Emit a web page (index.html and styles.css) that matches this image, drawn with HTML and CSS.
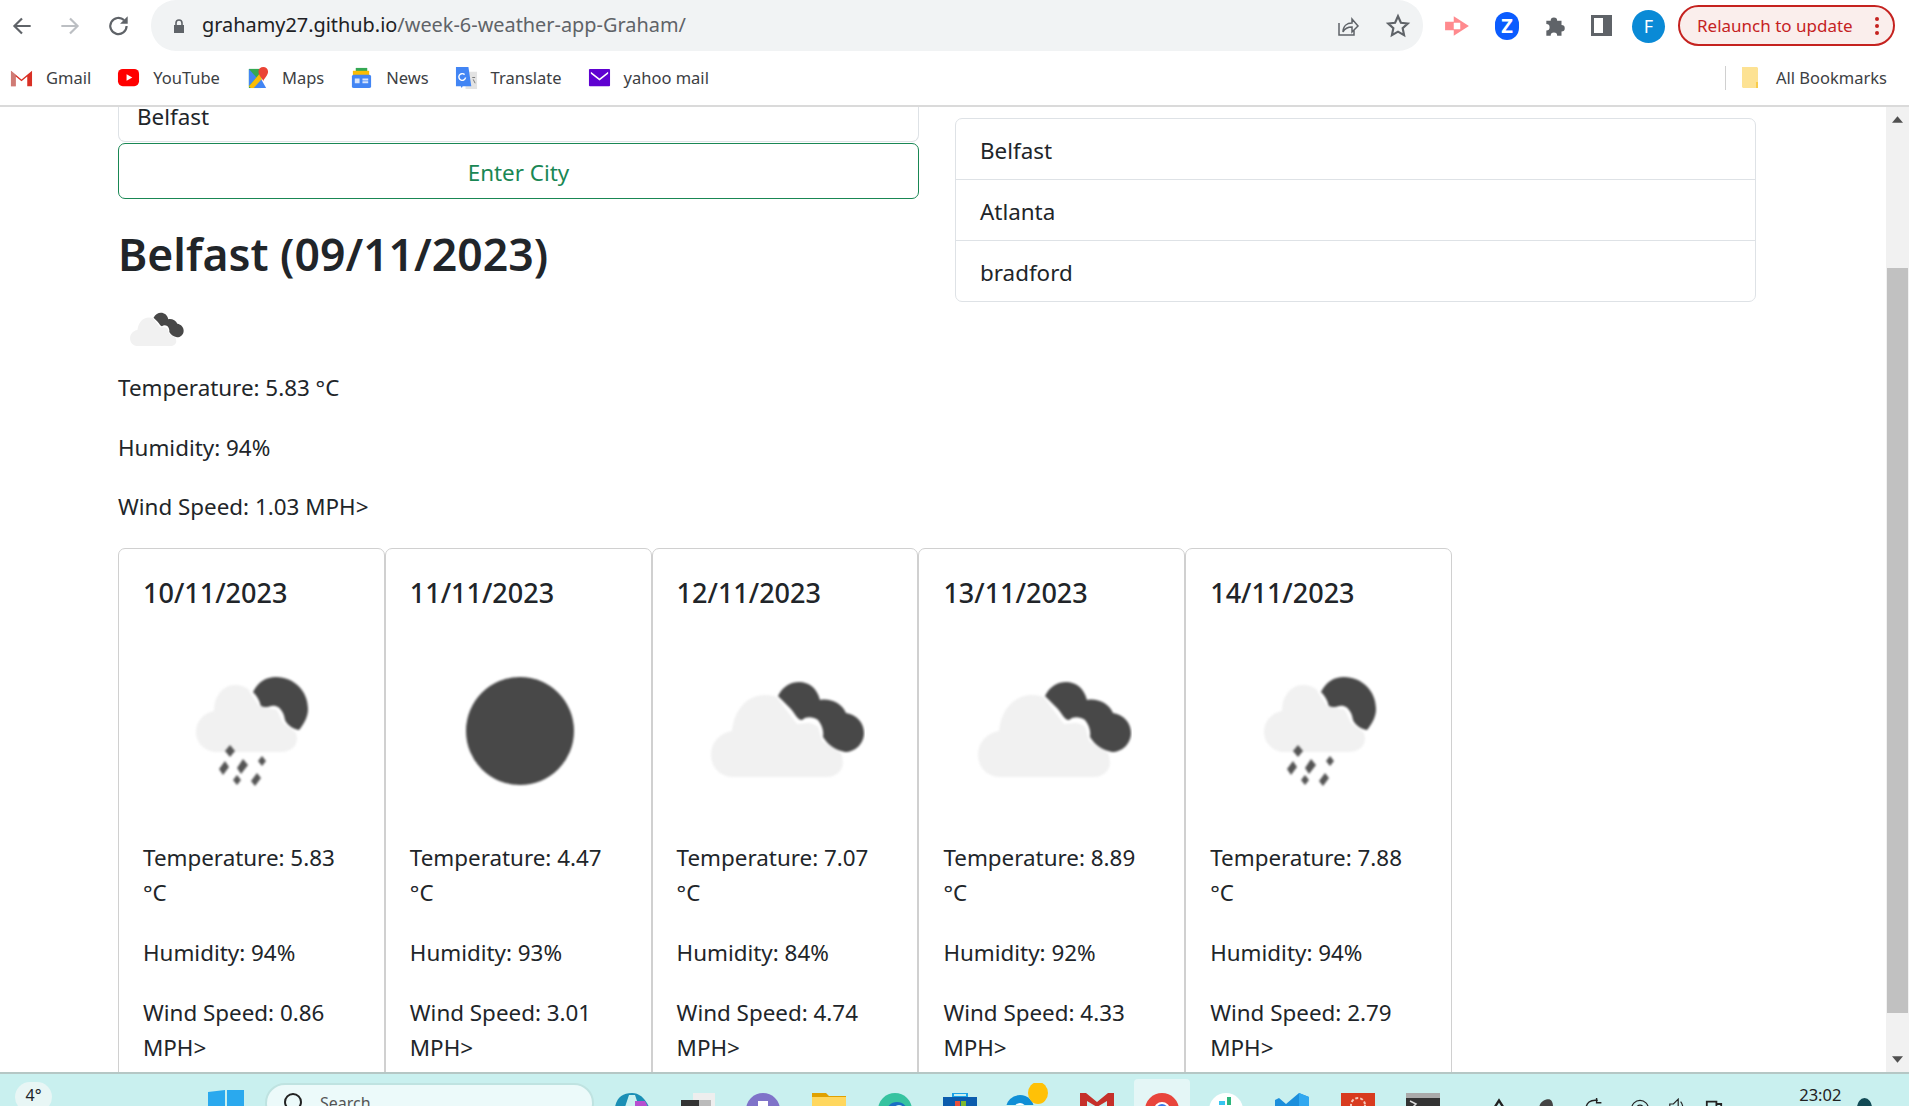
FILE: index.html
```html
<!DOCTYPE html>
<html lang="en">
<head>
    <meta charset="UTF-8">
    <title>Weather Dashboard</title>
    <link rel="stylesheet" href="styles.css">
</head>
<body>
    <svg class="defs" width="0" height="0">
        <symbol id="clouds-night" viewBox="0 0 160 160">
            <g transform="translate(0 14)" class="soft">
                <path fill="#f1f1f1" d="M28 112C15 112 6 102 6 90 6 77 15 68 27 66 29 45 42 30 60 30 78 30 90 42 96 55 115 60 124 68 128 78 134 82 138 90 138 98 138 106 130 112 122 112Z"/>
                <path fill="#fff" d="M70 30L92 59 112 57 117 76 140 91 160 70 100 12Z"/>
                <path fill="#484848" d="M73 31C78 21 86 17 94 17 104 17 112 23 115 35 125 33 137 38 141 48 152 50 159 58 159 68 159 79 150 87 140 87 130 85 123 80 118 72 119 66 117 60 113 55 108 52 102 51 97 55 92 55 91 49 84 42 78 38Z"/>
            </g>
        </symbol>
        <symbol id="snow-night" viewBox="0 0 160 160">
            <g class="soft">
                <path fill="#f1f1f1" d="M46 101C34 101 25 92 25 81 25 70 33 62 43 60 43 45 52 34 64 34 74 34 82 40 86 50 100 52 110 60 114 70 122 74 126 82 126 88 126 96 118 101 110 101Z"/>
                <path fill="#fff" d="M78 40L88 55 106 59 112 72 128 84 142 60 105 20Z"/>
                <path fill="#484848" d="M82 41C87 31 95 26 105 26 123 26 137 40 137 58 137 66 133 73 128 79 122 78 116 74 114 69 113 62 110 58 107 56 102 53 98 56 95 56 91 56 89 55 89 52 87 47 85 44 82 41Z"/>
                <g fill="#555">
                    <path d="M59 94l5 6-5 6-5-6z"/>
                    <path d="M54 110l4 6-6 8-4-6z"/>
                    <path d="M72 108l5 6-7 9-4-6z"/>
                    <path d="M91 105l4 5-4 5-4-5z"/>
                    <path d="M66 124l4 5-4 5-4-5z"/>
                    <path d="M86 122l4 5-6 8-4-5z"/>
                </g>
            </g>
        </symbol>
        <symbol id="clear-night" viewBox="0 0 160 160">
            <circle class="soft" cx="82" cy="80" r="54" fill="#484848"/>
        </symbol>
    </svg>

    <div class="toolbar">
        <svg class="nav-icon" viewBox="0 0 24 24"><path d="M20 12H5M12 5l-7 7 7 7" fill="none" stroke="#5f6368" stroke-width="2"/></svg>
        <svg class="nav-icon nav-forward" viewBox="0 0 24 24"><path d="M4 12h15M12 5l7 7-7 7" fill="none" stroke="#bcbfc3" stroke-width="2"/></svg>
        <svg class="nav-icon nav-reload" viewBox="0 0 24 24"><path d="M19 12a7.5 7.5 0 1 1-2.3-5.4" fill="none" stroke="#5f6368" stroke-width="2"/><path d="M20 3v7h-7z" fill="#5f6368"/></svg>
        <div class="omnibox">
            <svg class="lock" viewBox="0 0 16 16"><path d="M3 7h10v8H3z" fill="#5f6368"/><path d="M5 7V5a3 3 0 0 1 6 0v2" fill="none" stroke="#5f6368" stroke-width="1.6"/></svg>
            <span class="url">grahamy27.github.io<span class="url-path">/week-6-weather-app-Graham/</span></span>
            <svg class="share" viewBox="0 0 24 24"><path d="M3 9v12h15v-5M7 18c0-6 4-9 9-9V5l6 7-6 6v-5c-4 0-7 1-9 5z" fill="none" stroke="#5f6368" stroke-width="1.5"/></svg>
            <svg class="star" viewBox="0 0 24 24"><path d="M12 3l2.700 6 6.300.7-4.700 4.300 1.300 6.400L12 17.200 6.400 20.400 7.700 14 3 9.700 9.300 9z" fill="none" stroke="#5f6368" stroke-width="2"/></svg>
        </div>
        <svg class="ext-arrow" viewBox="0 0 24 24"><path d="M1 8h8V3l14 9-14 9v-5H1z" fill="#ff8a8e"/><path d="M9 9h6v6H9z" fill="#fff"/></svg>
        <div class="ext-zoom">Z</div>
        <svg class="ext-puzzle" viewBox="0 0 24 24"><path d="M4 8h4a3 3 0 0 1 6 0h4v4a3 3 0 0 1 0 6v4h-4a3 3 0 0 0-6 0H4v-5a3 3 0 0 0 0-6z" fill="#5f6368"/></svg>
        <div class="side-panel"></div>
        <div class="avatar">F</div>
        <div class="relaunch">
            <span>Relaunch to update</span>
            <span class="dots"><i></i><i></i><i></i></span>
        </div>
    </div>

    <div class="bookmarks">
        <div class="bookmark bm-gmail">
            <svg class="bm-icon" viewBox="0 0 24 20"><path d="M1 19V3l11 9 11-9v16h-5V9l-6 5-6-5v10z" fill="#d93025"/><path d="M1 19V3l5 4v12z" fill="#c5c5c5" opacity=".5"/></svg>
            <span>Gmail</span>
        </div>
        <div class="bookmark bm-youtube">
            <svg class="bm-icon" viewBox="0 0 24 20"><rect x="1" y="1" width="22" height="18" rx="5" fill="#f00"/><path d="M10 6.500l6 3.500-6 3.500z" fill="#fff"/></svg>
            <span>YouTube</span>
        </div>
        <div class="bookmark bm-maps">
            <svg class="bm-icon" viewBox="0 0 24 24"><path d="M3 3h13v20H3z" fill="#34a853"/><path d="M3 3l8 9-8 9z" fill="#4285f4"/><path d="M3 21L16 6v17H5z" fill="#fbbc04"/><path d="M8 23l8-9 5 9z" fill="#4285f4"/><path d="M18 1a5 5 0 0 1 5 5c0 4-5 8-5 10 0-2-5-6-5-10a5 5 0 0 1 5-5z" fill="#ea4335"/></svg>
            <span>Maps</span>
        </div>
        <div class="bookmark bm-news">
            <svg class="bm-icon" viewBox="0 0 24 24"><path d="M6 2h12v7H6z" fill="#34a853"/><path d="M3 5h17v5H3z" fill="#fbbc04"/><rect x="2" y="9" width="20" height="14" rx="2" fill="#4285f4"/><path d="M5 13h5v5H5zM13 13h6v2h-6zM13 16h6v2h-6z" fill="#d6e4fc"/></svg>
            <span>News</span>
        </div>
        <div class="bookmark bm-translate">
            <svg class="bm-icon" viewBox="0 0 24 24"><path d="M11 6h12v18H11z" fill="#e3e3e3"/><path d="M1 1h13l3 20H8l-1 2-1-2H1z" fill="#4285f4"/><path d="M11 12a3.500 3.500 0 1 1-1-3" fill="none" stroke="#fff" stroke-width="1.500"/><path d="M18 12h3M19 14l2 4" stroke="#777" stroke-width="1"/></svg>
            <span>Translate</span>
        </div>
        <div class="bookmark bm-yahoo">
            <svg class="bm-icon" viewBox="0 0 24 20"><rect x="1" y="1" width="22" height="18" rx="1" fill="#5f01d1"/><path d="M3 4l9 7 9-7v2l-9 7-9-7z" fill="#fff"/></svg>
            <span>yahoo mail</span>
        </div>
        <div class="bm-sep"></div>
        <div class="bookmark bm-all">
            <svg class="bm-folder" viewBox="0 0 18 22"><path d="M1 0h15l1 1v20H2l-1-1z" fill="#fde293"/><path d="M15 15h2v6h-2z" fill="#f9cc4a"/></svg>
            <span>All Bookmarks</span>
        </div>
    </div>

    <div class="viewport">
        <div class="page">
            <div class="top-grid">
                <div class="left-col">
                    <div class="city-input">Belfast</div>
                    <div class="city-btn">Enter City</div>
                    <h1 class="city-title">Belfast (09/11/2023)</h1>
                    <svg class="today-icon"><use href="#clouds-night"/></svg>
                    <p>Temperature: 5.83 °C</p>
                    <p>Humidity: 94%</p>
                    <p class="last-line">Wind Speed: 1.03 MPH&gt;</p>
                </div>
                <ul class="history">
                    <li>Belfast</li>
                    <li>Atlanta</li>
                    <li>bradford</li>
                </ul>
            </div>
            <div class="forecast">
                <div class="card">
                    <h5>10/11/2023</h5>
                    <svg class="card-icon"><use href="#snow-night"/></svg>
                    <p>Temperature: 5.83 °C</p>
                    <p>Humidity: 94%</p>
                    <p>Wind Speed: 0.86 MPH&gt;</p>
                </div>
                <div class="card">
                    <h5>11/11/2023</h5>
                    <svg class="card-icon"><use href="#clear-night"/></svg>
                    <p>Temperature: 4.47 °C</p>
                    <p>Humidity: 93%</p>
                    <p>Wind Speed: 3.01 MPH&gt;</p>
                </div>
                <div class="card">
                    <h5>12/11/2023</h5>
                    <svg class="card-icon"><use href="#clouds-night"/></svg>
                    <p>Temperature: 7.07 °C</p>
                    <p>Humidity: 84%</p>
                    <p>Wind Speed: 4.74 MPH&gt;</p>
                </div>
                <div class="card">
                    <h5>13/11/2023</h5>
                    <svg class="card-icon"><use href="#clouds-night"/></svg>
                    <p>Temperature: 8.89 °C</p>
                    <p>Humidity: 92%</p>
                    <p>Wind Speed: 4.33 MPH&gt;</p>
                </div>
                <div class="card">
                    <h5>14/11/2023</h5>
                    <svg class="card-icon"><use href="#snow-night"/></svg>
                    <p>Temperature: 7.88 °C</p>
                    <p>Humidity: 94%</p>
                    <p>Wind Speed: 2.79 MPH&gt;</p>
                </div>
            </div>
        </div>
        <div class="scrollbar">
            <svg class="scroll-arrow" viewBox="0 0 10 6"><path d="M5 0l5 6H0z" fill="#505050"/></svg>
            <div class="scroll-thumb"></div>
            <svg class="scroll-arrow" viewBox="0 0 10 6"><path d="M0 0h10L5 6z" fill="#505050"/></svg>
        </div>
    </div>

    <div class="taskbar">
        <div class="weather-pill">4°</div>
        <svg class="tb-win" viewBox="0 0 36 20"><path d="M0 2l17-2v20H0zM19 0h17v20H19z" fill="#2aa9ee"/></svg>
        <div class="tb-search">
            <svg class="tb-search-icon" viewBox="0 0 20 20"><circle cx="10" cy="10" r="8" fill="none" stroke="#222" stroke-width="2"/></svg>
            <span>Search</span>
        </div>
        <svg class="tb-app" viewBox="0 0 34 14"><path d="M0 14C2 4 8 0 17 0c7 0 13 5 17 14z" fill="#1b8fb5"/><path d="M14 2h6l4 12H10z" fill="#c9f0ef"/><path d="M20 8h10l3 6H20z" fill="#b64fd0"/></svg>
        <svg class="tb-app" viewBox="0 0 34 14"><path d="M12 0h22v14H12z" fill="#eee"/><path d="M0 7h18v7H0z" fill="#333"/><path d="M18 7h12v7H18z" fill="#bbb"/></svg>
        <svg class="tb-app" viewBox="0 0 34 14"><circle cx="17" cy="17" r="17" fill="#7f73c9"/><rect x="12" y="8" width="10" height="6" fill="#fff"/></svg>
        <svg class="tb-app" viewBox="0 0 34 14"><path d="M0 0h14l3 3h17v11H0z" fill="#e0a100"/><path d="M0 4h34v10H0z" fill="#ffd75e"/></svg>
        <svg class="tb-app" viewBox="0 0 34 14"><circle cx="17" cy="17" r="17" fill="#36c3a0"/><circle cx="19" cy="20" r="11" fill="#1a6fc4"/><circle cx="21" cy="18" r="6" fill="#c9f0ef"/></svg>
        <svg class="tb-app" viewBox="0 0 34 14"><path d="M10 0h14v4H10z" fill="none" stroke="#1aa3e8" stroke-width="2"/><path d="M0 4h34v10H0z" fill="#0b5cad"/><path d="M12 8h5v6h-5z" fill="#e8503a"/><path d="M18 8h5v6h-5z" fill="#7cb82f"/></svg>
        <svg class="tb-app tb-swirl" viewBox="0 0 42 22"><circle cx="14" cy="26" r="14" fill="#0f8fd6"/><circle cx="14" cy="26" r="6" fill="#fff"/><ellipse cx="32" cy="10" rx="10" ry="11" fill="#ffc107"/></svg>
        <svg class="tb-app" viewBox="0 0 34 14"><path d="M0 0h6l11 9 11-9h6v14h-7V8l-10 6L7 8v6H0z" fill="#c5302a"/></svg>
        <div class="tb-active">
            <svg class="tb-chrome" viewBox="0 0 34 14"><circle cx="17" cy="17" r="17" fill="#e8453c"/><path d="M0 17h17v17H0z" fill="#34a853"/><circle cx="17" cy="17" r="8" fill="#fff"/><circle cx="17" cy="17" r="6" fill="#3b78e7"/></svg>
        </div>
        <svg class="tb-app" viewBox="0 0 34 14"><circle cx="17" cy="17" r="17" fill="#fff"/><path d="M18 4h4v8h-4z" fill="#2eb67d"/><path d="M10 8h6v4h-6z" fill="#36c5f0"/></svg>
        <svg class="tb-app" viewBox="0 0 34 14"><path d="M0 7l4-2 7 6L24 0l10 4v10H0z" fill="#1c8fdc"/><path d="M24 0l10 4v10H24z" fill="#31a8f0"/></svg>
        <svg class="tb-app" viewBox="0 0 34 14"><path d="M0 0h34v14H0z" fill="#d83b1f"/><circle cx="17" cy="12" r="7" fill="none" stroke="#f4c9bb" stroke-width="2" stroke-dasharray="3 2"/></svg>
        <svg class="tb-app" viewBox="0 0 34 14"><path d="M0 0h34v6H0z" fill="#aaa"/><path d="M0 5h34v9H0z" fill="#333"/><path d="M4 8l6 3-3 3" fill="none" stroke="#ddd" stroke-width="1.500"/></svg>
        <div class="tb-tray">
            <svg class="tray-icon" viewBox="0 0 16 10"><path d="M3 10l5-8 5 8" fill="none" stroke="#222" stroke-width="2"/></svg>
            <svg class="tray-icon" viewBox="0 0 16 10"><path d="M2 10C2 4 6 1 10 1c3 0 4 3 4 9z" fill="#444"/></svg>
            <svg class="tray-icon" viewBox="0 0 16 10"><path d="M2 10C2 4 6 1 12 2M11 0v4h4" fill="none" stroke="#222" stroke-width="1.200"/></svg>
            <svg class="tray-icon" viewBox="0 0 16 10"><circle cx="8" cy="9" r="7" fill="none" stroke="#222" stroke-width="1"/><circle cx="8" cy="9" r="3" fill="none" stroke="#222" stroke-width="1"/></svg>
            <svg class="tray-icon tray-tight" viewBox="0 0 16 10"><path d="M2 5h3l4-4v9H2zM11 3c2 2 2 5 2 7" fill="none" stroke="#222" stroke-width="1"/></svg>
            <svg class="tray-icon tray-tight" viewBox="0 0 16 10"><path d="M2 3h8v7H2zM10 5h4v5h-4z" fill="none" stroke="#222" stroke-width="1.500"/></svg>
        </div>
        <div class="tb-time">23:02</div>
        <div class="tb-dot"></div>
    </div>
</body>
</html>
```

FILE: styles.css
```css
* {
    box-sizing: border-box;
}
html, body {
    margin: 0;
    padding: 0;
}
body {
    width: 1909px;
    height: 1106px;
    overflow: hidden;
    display: flex;
    flex-direction: column;
    font-family: "Noto Sans", "Open Sans", sans-serif;
    color: #212529;
    background-color: #fff;
}
.defs {
    position: absolute;
}
.soft {
    filter: blur(0.9px);
}

/* browser toolbar */
.toolbar {
    height: 52px;
    display: flex;
    align-items: flex-start;
    flex-shrink: 0;
}
.nav-icon {
    width: 26px;
    height: 26px;
    margin: 13px 0 0 9px;
    flex-shrink: 0;
}
.nav-forward {
    margin-left: 22px;
}
.nav-reload {
    margin-left: 23px;
}
.omnibox {
    width: 1272px;
    height: 51px;
    margin-left: 19px;
    background-color: #f1f3f4;
    border-radius: 25px;
    display: flex;
    align-items: center;
    padding-left: 20px;
}
.lock {
    width: 16px;
    height: 18px;
}
.url {
    margin-left: 15px;
    font-size: 19.900px;
    color: #202124;
    white-space: nowrap;
    margin-top: -2px;
}
.url-path {
    color: #5f6368;
}
.share {
    width: 24px;
    height: 24px;
    margin-left: auto;
}
.star {
    width: 26px;
    height: 26px;
    margin: 0 12px 0 25px;
}
.ext-arrow {
    width: 26px;
    height: 26px;
    margin: 13px 0 0 21px;
}
.ext-zoom {
    width: 24px;
    height: 28px;
    margin: 12px 0 0 25px;
    border-radius: 12px;
    background-color: #0b5cff;
    color: #fff;
    font-size: 20px;
    font-weight: 700;
    line-height: 28px;
    text-align: center;
}
.ext-puzzle {
    width: 26px;
    height: 26px;
    margin: 12px 0 0 23px;
}
.side-panel {
    width: 21px;
    height: 21px;
    margin: 15px 0 0 23px;
    border: 3px solid #5f6368;
    border-right-width: 9px;
}
.avatar {
    width: 33px;
    height: 33px;
    margin: 10px 0 0 20px;
    border-radius: 50%;
    background-color: #0a8ad6;
    color: #fff;
    font-size: 18px;
    line-height: 33px;
    text-align: center;
}
.relaunch {
    width: 217px;
    height: 41px;
    margin: 5px 0 0 13px;
    padding-left: 17px;
    border: 2px solid #c5221f;
    border-radius: 21px;
    background-color: #faeeec;
    color: #c5221f;
    font-size: 17px;
    display: flex;
    align-items: center;
}
.dots {
    margin-left: 22px;
    display: flex;
    flex-direction: column;
    gap: 3px;
}
.dots i {
    display: block;
    width: 4px;
    height: 4px;
    border-radius: 50%;
    background-color: #c5221f;
}

/* bookmarks bar */
.bookmarks {
    height: 55px;
    flex-shrink: 0;
    display: flex;
    align-items: center;
    padding: 0 0 2px 10px;
    border-bottom: 2px solid #dadada;
    font-size: 16.500px;
    color: #3c4043;
}
.bookmark {
    display: flex;
    align-items: center;
    white-space: nowrap;
}
.bm-icon {
    width: 23px;
    height: 23px;
    margin-right: 13px;
    flex-shrink: 0;
}
.bm-youtube, .bm-maps, .bm-news, .bm-translate, .bm-yahoo {
    margin-left: 26px;
}
.bm-sep {
    width: 1px;
    height: 24px;
    margin-left: auto;
    background-color: #d0d0d0;
}
.bm-folder {
    width: 18px;
    height: 22px;
    margin-right: 17px;
}
.bm-all {
    margin: 0 22px 0 15px;
}

/* page */
.viewport {
    flex: 1;
    min-height: 0;
    display: flex;
}
.page {
    width: 1886px;
    padding-left: 118px;
    overflow: hidden;
    font-size: 22.400px;
    line-height: 35.600px;
}
.page p {
    margin: 0 0 24px 0;
}
.page p.last-line {
    margin-bottom: 23px;
}
.top-grid {
    width: 1638px;
    display: grid;
    grid-template-columns: 801px 801px;
    column-gap: 36px;
}
.city-input {
    height: 35px;
    padding-left: 18px;
    border: 1px solid #dee2e6;
    border-top: none;
    border-radius: 0 0 7px 7px;
    line-height: 19px;
}
.city-btn {
    height: 56px;
    margin-top: 1px;
    border: 1px solid #198754;
    border-radius: 7px;
    color: #198754;
    line-height: 57px;
    text-align: center;
}
.city-title {
    margin: 25px 0 0 0;
    font-size: 44.500px;
    font-weight: 600;
    line-height: 60px;
}
.today-icon {
    display: block;
    width: 56px;
    height: 56px;
    margin: 18px 0 12px 10px;
}
.history {
    list-style: none;
    margin: 11px 0 0 0;
    padding: 0;
    height: 184px;
    border: 1px solid #dee2e6;
    border-radius: 7px;
}
.history li {
    height: 61px;
    padding-left: 24px;
    line-height: 63px;
    border-bottom: 1px solid #dee2e6;
}
.history li:last-child {
    border-bottom: none;
}
.forecast {
    display: flex;
}
.card {
    width: 266.800px;
    height: 600px;
    flex-shrink: 0;
    padding: 24px;
    border: 1px solid #d0d0d0;
    border-radius: 7px;
}
.card h5 {
    margin: 0;
    font-size: 27px;
    font-weight: 500;
    line-height: 40px;
}
.card-icon {
    display: block;
    width: 160px;
    height: 160px;
    margin: 38px auto 29px auto;
}

/* scrollbar */
.scrollbar {
    width: 23px;
    background-color: #f1f1f1;
    display: flex;
    flex-direction: column;
    align-items: center;
}
.scroll-arrow {
    width: 11px;
    height: 7px;
    margin: 9px 0;
}
.scroll-thumb {
    width: 21px;
    height: 745px;
    margin-top: 136px;
    margin-bottom: auto;
    background-color: #c1c1c1;
}

/* windows taskbar */
.taskbar {
    height: 34px;
    flex-shrink: 0;
    display: flex;
    align-items: flex-start;
    overflow: hidden;
    border-top: 2px solid #b5c7c5;
    background-color: #c9f0ef;
}
.weather-pill {
    width: 37px;
    height: 30px;
    margin: 8px 0 0 15px;
    border-radius: 15px;
    background-color: #e8f6f5;
    font-size: 16px;
    line-height: 26px;
    text-align: center;
    flex-shrink: 0;
}
.tb-win {
    width: 36px;
    height: 20px;
    margin: 16px 0 0 156px;
    flex-shrink: 0;
}
.tb-search {
    width: 329px;
    height: 40px;
    margin: 9px 0 0 21px;
    padding-left: 16px;
    display: flex;
    align-items: flex-start;
    border: 2px solid #bfe3e1;
    border-radius: 20px;
    background-color: #ecfafa;
    color: #555;
    font-size: 16px;
    flex-shrink: 0;
}
.tb-search-icon {
    width: 20px;
    height: 20px;
    margin: 7px 17px 0 0;
}
.tb-search span {
    margin-top: 7px;
}
.tb-app {
    width: 34px;
    height: 14px;
    margin: 19px 0 0 31.700px;
    flex-shrink: 0;
}
.tb-swirl {
    width: 42px;
    height: 22px;
    margin: 9px 0 0 29px;
}
.tb-search + .tb-app {
    margin-left: 21px;
}
.tb-active {
    width: 56px;
    height: 30px;
    margin: 5px 0 0 20px;
    border-radius: 4px 4px 0 0;
    background-color: #e4f6f6;
    display: flex;
    justify-content: center;
    padding-top: 14px;
    flex-shrink: 0;
}
.tb-chrome {
    width: 34px;
    height: 14px;
}
.tb-active + .tb-app {
    margin-left: 19px;
}
.tb-tray {
    margin: 24px 0 0 49px;
    display: flex;
    gap: 27px;
    flex-shrink: 0;
}
.tray-icon {
    width: 20px;
    height: 12px;
}
.tray-tight {
    margin-left: -10px;
}
.tb-time {
    margin: 10px 0 0 75px;
    font-size: 16.500px;
    line-height: 22px;
    color: #222;
}
.tb-dot {
    width: 15px;
    height: 20px;
    margin: 24px 0 0 16px;
    border-radius: 50%;
    background-color: #124a55;
    flex-shrink: 0;
}
```
